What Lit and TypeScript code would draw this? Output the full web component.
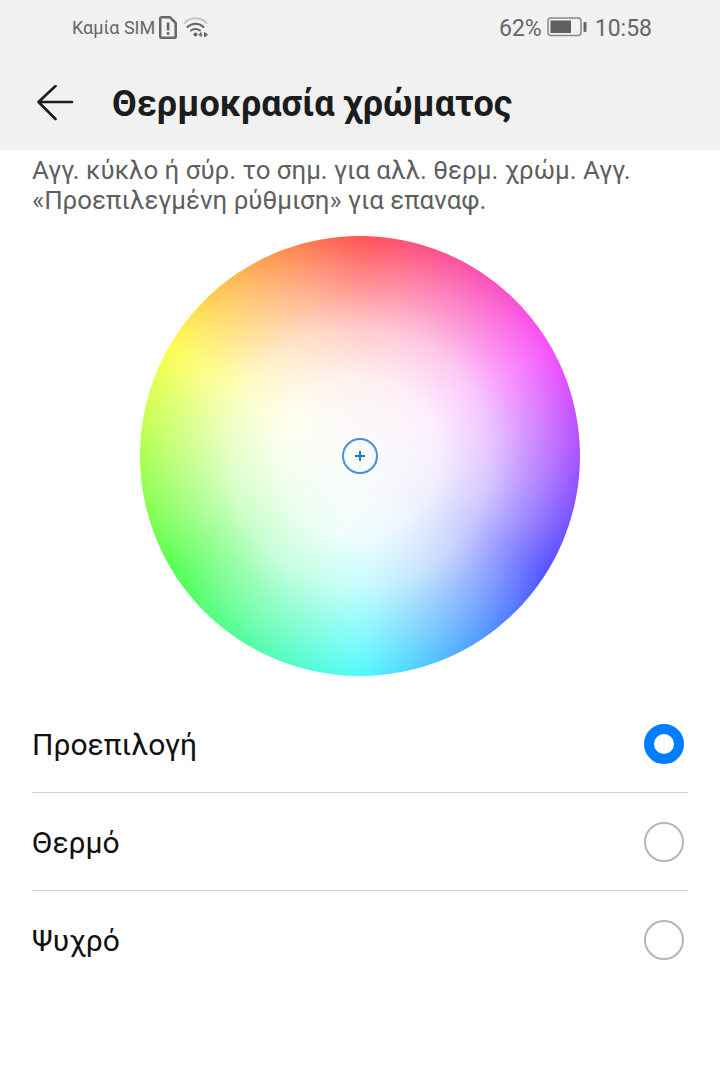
import { LitElement, html, css } from 'lit';
import { customElement, state } from 'lit/decorators.js';
import { classMap } from 'lit/directives/class-map.js';

const OPTIONS = ['Προεπιλογή', 'Θερμό', 'Ψυχρό'];

@customElement('app-root')
export class AppRoot extends LitElement {
  static styles = css`
    :host {
      display: block;
      width: 720px;
      height: 1084px;
      background: #fff;
      font-family: Roboto, 'Noto Sans', sans-serif;
      overflow: hidden;
    }
    .top {
      background: #f1f1f1;
      height: 150px;
    }
    .status {
      display: flex;
      align-items: center;
      height: 54px;
      padding: 0 68px 0 72px;
      color: #666;
    }
    .carrier {
      font-size: 18px;
      margin-right: 4px;
    }
    .sim {
      margin-right: 6px;
    }
    .spacer {
      flex: 1;
    }
    .pct,
    .time {
      font-size: 23px;
      padding-top: 2px;
    }
    .battery {
      margin: 0 8px 0 5px;
    }
    .bar {
      display: flex;
      align-items: center;
      height: 100px;
    }
    .back {
      margin-left: 36px;
      margin-right: 38px;
    }
    h1 {
      margin: 0;
      font-size: 36px;
      font-weight: 700;
      color: #1c1c1c;
    }
    .hint {
      margin: 5px 32px 0;
      font-size: 25.9px;
      line-height: 30px;
      color: #5f5f5f;
      white-space: nowrap;
    }
    .wheel-wrap {
      display: flex;
      justify-content: center;
      margin-top: 21px;
    }
    .wheel {
      position: relative;
      width: 440px;
      height: 440px;
      border-radius: 50%;
      overflow: hidden;
    }
    .hues,
    .fade {
      position: absolute;
      inset: 0;
    }
    .hues {
      inset: -30px;
      filter: blur(10px);
      background: conic-gradient(#ff5252 0deg, #f850ff 60deg, #5252ff 122deg, #52fbff 180deg, #52ff52 238deg, #ffff52 300deg, #ff5252 360deg);
    }
    .fade {
      background: radial-gradient(
        circle closest-side,
        rgb(251, 251, 251) 0%,
        rgba(252, 252, 252, 0.97) 20%,
        rgba(255, 255, 255, 0.9) 36%,
        rgba(255, 255, 255, 0.68) 59%,
        rgba(255, 255, 255, 0.42) 74%,
        rgba(255, 255, 255, 0.2) 88%,
        rgba(255, 255, 255, 0) 100%
      );
    }
    .pin {
      position: absolute;
      left: 202px;
      top: 202px;
    }
    .options {
      margin: 19px 32px 0;
    }
    .row {
      display: flex;
      align-items: center;
      justify-content: space-between;
      height: 97px;
      padding-right: 4px;
      border-bottom: 1px solid #d2d2d2;
    }
    .row:last-child {
      border-bottom: none;
    }
    .label {
      position: relative;
      top: 1px;
      font-size: 30px;
      color: #111;
    }
    .radio {
      box-sizing: border-box;
      width: 40px;
      height: 40px;
      border-radius: 50%;
      border: 2px solid #b6b6b6;
    }
    .radio.on {
      border: 10px solid #007dff;
    }
  `;

  @state() private selected = 0;

  private renderStatus() {
    return html`
      <div class="status">
        <span class="carrier">Καμία SIM</span>
        <svg class="sim" width="18" height="23" viewBox="0 0 18 23" fill="none">
          <path d="M2.5 1.3h8.5l5.7 5.7v13.4a1.3 1.3 0 0 1-1.3 1.3H2.5a1.3 1.3 0 0 1-1.3-1.3V2.6a1.3 1.3 0 0 1 1.3-1.3z" stroke="#666" stroke-width="2.5" stroke-linejoin="round" />
          <rect x="7.8" y="6.5" width="2.6" height="8" fill="#666" />
          <rect x="7.8" y="16" width="2.6" height="2.8" fill="#666" />
        </svg>
        <svg width="26" height="22" viewBox="0 0 26 22" fill="none">
          <path d="M1.5 7C7.5 .8 17.5 .8 23.5 7" stroke="#c4c4c4" stroke-width="2" stroke-linecap="round" />
          <path d="M4.5 11C9 6.6 16 6.6 20.5 11" stroke="#666" stroke-width="2" stroke-linecap="round" />
          <path d="M8 14.5C10.5 12.4 14.5 12.4 17 14.5" stroke="#666" stroke-width="2" stroke-linecap="round" />
          <circle cx="12.5" cy="18.5" r="2" fill="#666" />
          <path d="M18 21v-4.5l-2.2 2.6h3.4M21.5 16.5l3 2.2-3 2.2z" stroke="#666" stroke-width="1" fill="#666" />
        </svg>
        <span class="spacer"></span>
        <span class="pct">62%</span>
        <svg class="battery" width="40" height="20" viewBox="0 0 40 20" fill="none">
          <rect x="1" y="1" width="33" height="17.5" rx="3" stroke="#888" stroke-width="1.5" />
          <rect x="3.5" y="3.5" width="20.5" height="12.5" fill="#5f5f5f" />
          <rect x="36.5" y="5" width="3" height="10" rx="1" fill="#666" />
        </svg>
        <span class="time">10:58</span>
      </div>
    `;
  }

  protected render() {
    return html`
      <div class="top">
        ${this.renderStatus()}
        <div class="bar">
          <svg class="back" width="38" height="38" viewBox="0 0 38 38" fill="none">
            <path d="M36 17H2.5M19.5 1L2.5 17 19.5 34" stroke="#1c1c1c" stroke-width="2.6" stroke-linecap="round" stroke-linejoin="round" />
          </svg>
          <h1>Θερμοκρασία χρώματος</h1>
        </div>
      </div>
      <p class="hint">
        Αγγ. κύκλο ή σύρ. το σημ. για αλλ. θερμ. χρώμ. Αγγ.<br />«Προεπιλεγμένη ρύθμιση» για επαναφ.
      </p>
      <div class="wheel-wrap">
        <div class="wheel">
          <div class="hues"></div>
          <div class="fade"></div>
          <svg class="pin" width="36" height="36" viewBox="0 0 36 36" fill="none">
            <circle cx="18" cy="18" r="17" stroke="#3f92e4" stroke-width="2" />
            <path d="M13 18h10M18 13v10" stroke="#1c78c0" stroke-width="2" />
          </svg>
        </div>
      </div>
      <div class="options">
        ${OPTIONS.map(
          (name, i) => html`
            <div class="row" @click=${() => (this.selected = i)}>
              <span class="label">${name}</span>
              <span class=${classMap({ radio: true, on: this.selected === i })}></span>
            </div>
          `
        )}
      </div>
    `;
  }
}
